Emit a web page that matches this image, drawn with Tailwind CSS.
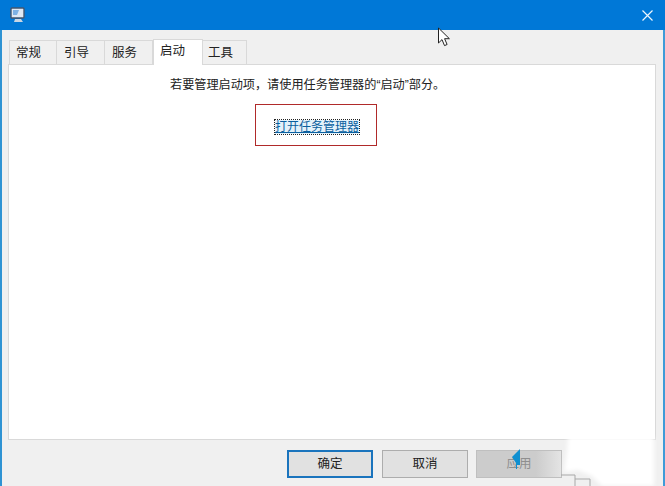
<!DOCTYPE html>
<html>
<head>
  <meta charset="utf-8">
  <script src="https://cdn.jsdelivr.net/npm/@tailwindcss/browser@4"></script>
</head>
<body class="w-[665px] h-[486px] overflow-hidden bg-[#f0f0f0] font-['Liberation_Sans','Noto_Sans_CJK_SC',sans-serif] text-[12.5px] text-[#222]">
  <div class="relative flex flex-col h-full border-l-2 border-r-2 border-l-[#2f93d3] border-r-[#3f9bd8]">
    <!-- title bar -->
    <div class="flex items-center justify-between h-[30px] -ml-[2px] -mr-[2px] bg-[#0078d7] pl-[9px] pr-[12px] shrink-0">
      <svg width="17" height="18" viewBox="0 0 17 18">
        <rect x="2" y="2" width="13" height="10" rx="1" fill="#dfe9f5" stroke="#44566e" stroke-width="1.4"/>
        <path d="M4 4h6l-2 5H4z" fill="#7fb2e5"/>
        <path d="M6 13h6l2 3H5z" fill="#c9d6e4"/>
      </svg>
      <svg width="11" height="11" viewBox="0 0 11 11" stroke="#eef6fd" stroke-width="1.2"><path d="M0.5 0.5l10 10M10.5 0.5l-10 10"/></svg>
    </div>

    <!-- tabs -->
    <div class="flex items-end h-[34px] pl-[7px] shrink-0">
      <div class="flex items-center w-[48px] h-[24px] pl-[6px] pt-[1px] bg-[#f0f0f0] border border-b-0 border-[#d9d9d9]">常规</div>
      <div class="flex items-center w-[48px] h-[24px] pl-[7px] pt-[1px] bg-[#f0f0f0] border border-l-0 border-b-0 border-[#d9d9d9]">引导</div>
      <div class="flex items-center w-[48px] h-[24px] pl-[7px] pt-[1px] bg-[#f0f0f0] border border-l-0 border-b-0 border-[#d9d9d9]">服务</div>
      <div class="flex items-center w-[50px] h-[26px] -mb-px pl-[6px] pb-[2px] bg-white border border-b-0 border-[#d9d9d9] relative z-10">启动</div>
      <div class="flex items-center w-[44px] h-[24px] pl-[5px] pt-[1px] bg-[#f0f0f0] border border-l-0 border-b-0 border-[#d9d9d9]">工具</div>
    </div>

    <!-- panel -->
    <div class="flex flex-col items-start h-[376px] ml-[6px] mr-[7px] pt-[12px] bg-white border border-[#d9d9d9] shrink-0">
      <p class="ml-[161px] leading-[16px] text-[12.15px]">若要管理启动项，请使用任务管理器的“启动”部分。</p>
      <div class="flex items-center justify-center w-[122px] h-[42px] ml-[246px] mt-[11px] pt-[3px] pl-[2px] border border-[#b02a2a]">
        <a class="leading-[14px] text-[12px] text-[#0a5f9e] underline outline-1 outline-dotted outline-[#222] bg-[#e4f2fb]">打开任务管理器</a>
      </div>
    </div>

    <!-- buttons -->
    <div class="flex justify-end gap-[9px] pt-[10px] pr-[101px]">
      <button class="w-[86px] h-[28px] bg-[#e1e1e1] border-2 border-[#1a74bd]">确定</button>
      <button class="w-[86px] h-[28px] bg-[#e1e1e1] border border-[#adadad]">取消</button>
      <button class="w-[86px] h-[28px] -ml-[1px] bg-gradient-to-r from-[#cccccc] from-70% to-[#e4e4e4] border border-[#bfbfbf] text-[#8f8f8f]">应用</button>
    </div>

    <!-- torn edge, bottom right -->
    <svg class="absolute left-[-2px] top-0" width="665" height="486" viewBox="0 0 665 486" fill="none">
      <path d="M568 437H654V486H602L592 476L578 470L564 472L567 452z" fill="#fff" class="blur-[2px]"/>
      <path d="M561 475H575V486M575 479H590V486" stroke="#a8a8a8"/>
    </svg>

    <!-- mouse pointers lying over the screenshot -->
    <svg class="absolute left-[435px] top-[27px]" width="15" height="20" viewBox="0 0 15 20">
      <path d="M1.5 1v15l3.5-3.4 2.5 6 2.6-1.1-2.5-5.8h4.8z" fill="#fff" stroke="#222" stroke-width="1"/>
    </svg>
    <svg class="absolute left-[509px] top-[448px]" width="10" height="22" viewBox="0 0 10 22">
      <path d="M1 9l8-8v16h-3v4h-1v-6z" fill="#0f8fd0"/>
    </svg>
  </div>
</body>
</html>
